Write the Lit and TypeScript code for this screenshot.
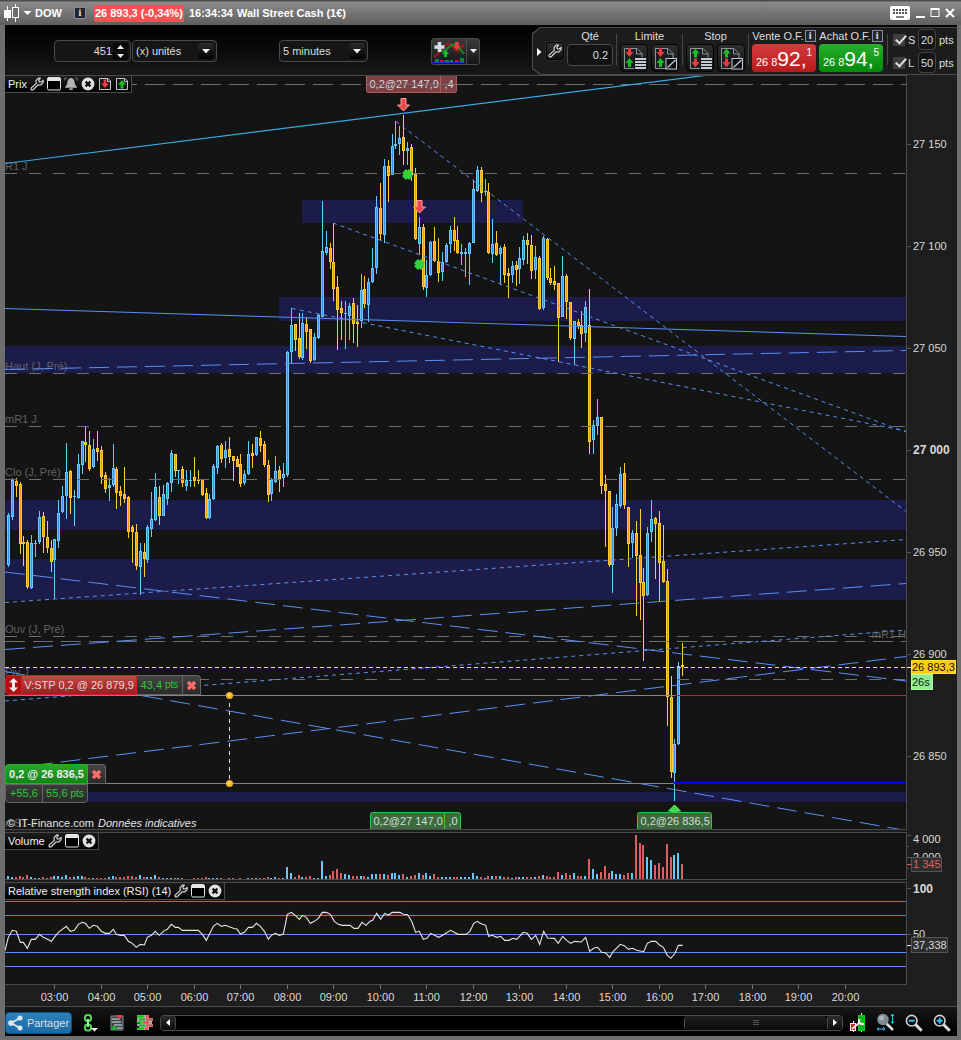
import { LitElement, html, svg, css } from "lit";
import { customElement, state } from "lit/decorators.js";

// One entry per five-minute bar: direction, high, body top, body bottom, low (plot rows).
const BARS = `u513 515 565 567,u478 480 517 520,d478 481 486 497,d482 484 544 554,d536 542 544 566,d540 542 587 589,u535 543 588 589,u540 543 544 557,u511 517 542 544,d512 516 537 553,d521 537 548 553,d540 548 562 572,u539 539 560 599,u500 513 541 548,u486 496 512 513,u443 472 496 519,d470 471 498 514,u490 496 497 526,u454 464 498 499,u441 441 465 474,d427 442 445 462,d431 445 469 471,u439 449 467 468,d431 448 452 461,d446 450 477 484,d472 475 489 493,u478 485 488 501,u444 468 485 487,d467 469 493 509,d486 491 496 506,d467 494 499 503,d496 497 532 538,d525 527 532 563,d524 532 566 570,u543 551 567 595,d543 552 559 577,u525 527 560 563,u492 519 529 537,u473 487 520 521,d486 497 516 525,u485 494 516 516,u482 483 499 505,u450 453 483 492,d454 454 471 477,u470 470 471 484,d466 469 483 487,u470 480 486 491,u470 480 481 487,d457 477 481 487,d470 480 481 484,d480 480 495 496,d488 493 518 519,u494 499 518 519,u464 466 499 500,u445 446 468 474,d443 445 459 463,u441 450 458 468,d437 449 457 463,d456 456 461 481,d456 459 467 467,d454 464 484 487,u470 474 483 485,u441 454 474 475,d444 453 456 468,u437 437 455 456,d431 438 446 452,d441 444 465 467,d460 465 495 502,u478 480 494 501,u456 471 482 483,d466 470 480 492,u463 474 478 487,u351 352 475 477,u308 325 352 363,d324 324 340 351,d313 338 357 359,u313 323 358 360,d317 324 332 349,d329 329 361 363,u333 337 360 361,u314 315 338 339,u201 251 317 317,u231 247 253 255,d243 248 262 269,d223 262 289 301,d276 287 310 350,d301 308 313 340,u301 313 314 349,u303 306 316 340,d298 303 324 343,d305 322 324 347,u274 290 321 328,d276 289 304 308,u278 282 305 322,u248 268 282 283,u196 207 268 274,d183 208 234 240,u159 166 235 243,d160 166 176 202,u134 146 175 175,u121 144 146 149,u126 138 144 155,d115 137 151 165,u142 148 151 165,d144 147 175 181,d168 174 239 240,u217 227 244 255,d224 227 287 290,u260 275 288 297,u241 242 275 276,d227 241 261 262,d238 261 273 282,u252 262 272 281,u243 245 262 263,u226 230 244 253,d217 230 241 251,d226 240 253 254,u244 252 254 265,u248 252 254 277,u242 243 254 285,u180 189 243 243,u166 170 191 192,d167 170 193 202,u179 191 192 196,d183 192 253 254,u219 244 254 263,d231 243 255 256,u246 248 254 285,d244 247 275 283,d268 273 276 298,u261 266 275 283,d261 265 270 286,u247 258 269 284,u236 240 260 265,d233 240 245 264,d235 245 271 279,u246 257 270 279,d256 258 309 310,u236 238 308 310,d238 239 278 280,d268 278 283 285,d266 281 285 290,d283 283 318 362,u256 276 317 317,d274 276 302 319,d302 302 338 340,u321 321 339 365,d319 322 326 329,d311 325 334 348,u301 307 333 342,d289 325 442 454,u420 425 440 454,u399 417 426 435,d417 417 486 494,d475 484 491 547,d491 491 565 567,u507 528 565 593,u494 504 528 536,u467 474 506 508,d463 473 505 509,d507 507 544 567,u530 533 543 558,d521 533 556 616,d509 555 583 620,d568 582 596 661,u527 533 595 596,u500 519 532 542,d517 518 524 579,d511 523 563 601,d525 561 582 583,d569 581 697 726,d676 697 772 778,u739 744 773 801,u662 666 744 745,d643 665 667 676`
  .split(",")
  .map((s, i) => {
    const [high, top, bottom, low] = s.slice(1).split(" ").map(Number);
    return { x: Math.floor(8.45 + 3.875 * i), up: s[0] === "u", high, top, bottom, low };
  });

const VOLUME = [
  3, 2, 2, 3, 2, 4, 2, 1, 1, 2, 1, 2, 3, 3, 2, 4, 2, 2, 3, 3, 2, 1, 1, 1, 1, 1, 2, 3, 2, 2, 2, 3, 3, 2, 4, 2, 2, 2, 4, 2,
  1, 1, 1, 1, 1, 1, 0, 0, 1, 1, 1, 2, 1, 1, 1, 1, 0, 1, 1, 0, 1, 0, 1, 1, 1, 1, 1, 2, 1, 2, 1, 1, 12, 6, 2, 4, 2, 2, 3, 1,
  1, 18, 3, 4, 8, 10, 6, 5, 4, 3, 3, 3, 3, 2, 5, 5, 5, 5, 4, 6, 6, 4, 5, 2, 3, 4, 6, 4, 6, 3, 5, 2, 2, 2, 2, 2, 2, 2, 2, 2,
  6, 3, 2, 1, 3, 3, 3, 3, 2, 2, 1, 2, 2, 2, 2, 2, 2, 3, 4, 3, 2, 2, 7, 4, 6, 4, 6, 3, 3, 3, 20, 10, 5, 7, 13, 6, 8, 5, 5, 4,
  6, 6, 44, 36, 34, 22, 19, 14, 16, 12, 35, 22, 24, 26, 15,
];

// Oscillator points on a grid three times finer than the pane.
const RSI =
  "15,212 25,172 37,151 49,154 61,187 70,187 82,205 94,178 106,178 118,163 130,172 154,184 163,172 175,157 199,139 211,154 223,151 235,133 247,127 256,130 268,145 280,136 292,139 304,154 316,160 328,160 340,148 349,163 361,166 373,166 385,184 397,190 409,202 421,193 433,195 442,172 454,166 466,154 478,166 490,154 502,148 514,133 526,142 535,142 547,151 595,151 607,163 619,181 640,139 652,130 664,139 676,136 700,145 712,148 721,162 733,157 745,142 757,142 769,130 781,139 793,154 805,178 814,166 826,160 838,166 850,162 862,103 874,97 886,106 898,118 907,106 919,112 931,130 943,124 955,115 967,97 979,97 991,103 1003,124 1015,133 1027,136 1050,136 1062,145 1074,145 1086,127 1098,136 1110,124 1118,121 1130,100 1142,118 1154,100 1165,105 1177,97 1200,97 1210,103 1223,104 1235,124 1247,157 1258,154 1270,178 1281,175 1292,160 1316,172 1328,166 1352,151 1374,163 1398,163 1410,154 1421,130 1433,124 1440,130 1457,136 1466,169 1477,166 1490,172 1502,169 1514,181 1527,181 1538,175 1550,178 1570,157 1582,160 1594,178 1607,166 1619,193 1631,154 1643,174 1663,175 1675,190 1688,169 1700,181 1712,190 1724,184 1744,186 1757,172 1769,214 1781,205 1793,202 1805,217 1817,219 1829,232 1840,214 1861,193 1873,197 1885,208 1897,205 1910,211 1931,215 1942,190 1954,184 1967,184 1980,196 1990,202 2002,226 2013,235 2025,220 2035,196 2048,196";

const BANDS = [
  [302, 200, 221, 23], [279, 297, 2000, 24], [5, 346, 2000, 27],
  [5, 500, 2000, 30], [5, 559, 2000, 41], [5, 792, 2000, 10],
];
const LEVELS: [number, string][] = [
  [84, "20 8"], [173, "12 12"], [373, "12 12"], [426, "12 12"],
  [479, "12 12"], [636, "12 12"], [641, "20 8"], [679, "12 12"],
];
const LEVEL_NAMES: [number, string][] = [
  [170, "R1 J"], [370, "Haut (J, Pré)"], [423, "mR1 J"], [476, "Clo (J, Pré)"],
  [633, "Ouv (J, Pré)"], [676, "Piv J"], [827, "mS1 J"],
];
const TRENDS: [number, number, number, number, string][] = [
  [5, 369.5, 906, 350.5, "20 8"], [5, 572, 906, 681, "20 8"], [5, 649.5, 906, 583.5, "20 8"],
  [5, 769, 906, 656.5, "20 8"], [5, 671.5, 906, 830.5, "20 8"],
  [396, 121.5, 906, 511.5, "4 4"], [333, 223, 906, 432, "4 4"], [292, 308.5, 906, 431, "4 4"],
  [5, 602.5, 906, 539.5, "4 4"], [5, 701, 906, 630, "4 4"],
];

const wrench = html`<svg width="14" height="14" viewBox="0 0 14 14">
  <path d="M1 11.2 L6.3 6.3 L6 3.6 L8.6 1 L10.4 1 L8.8 3.4 L9.3 5 L11 5 L13.2 3.4 L13 5.8 L10.6 8 L8 7.8 L2.9 13 L1.2 13 Z" fill="#151515" stroke="#e2e2e2" stroke-width="1.1" stroke-linejoin="round"/>
</svg>`;
const windowIcon = html`<svg width="14" height="14" viewBox="0 0 14 14">
  <rect x=".5" y=".5" width="13" height="12.5" rx="1.5" fill="#000" stroke="#e6e6e6"/><rect x="1" y="1" width="12" height="3" fill="#e6e6e6"/>
</svg>`;
const bell = html`<svg width="14" height="14" viewBox="0 0 14 14">
  <path d="M7 1 C10.2 1.4 10.4 4 10.8 6.500 C11.1 8.500 12.800 9.200 13.200 10.800 L.8 10.800 C1.200 9.200 2.900 8.500 3.200 6.500 C3.600 4 3.800 1.400 7 1Z" fill="#b4b4b4"/>
  <rect x="5" y="11.3" width="4" height="1.7" rx=".8" fill="#ababab"/><path d="M.8 3.5V1h2M13.2 3.5V1h-2" fill="none" stroke="#777"/>
</svg>`;
const closeIcon = html`<svg width="14" height="14" viewBox="0 0 14 14">
  <circle cx="7" cy="7" r="6.4" fill="#e2e2e2"/><path d="M4.6 4.6l4.8 4.8M9.4 4.6l-4.8 4.8" stroke="#111" stroke-width="2.3"/>
</svg>`;
const sheetArrow = (down: boolean) => html`<svg width="14" height="14" viewBox="0 0 14 14">
  <path d="M1.500 1.500h8.500l2.500 2.500v8.500h-11z" fill="#161616" stroke="#c0c6cb"/><path d="M9.500 1.500v3h3" fill="none" stroke="#c0c6cb"/>
  ${down
    ? svg`<path d="M5.6 2.5h2.8v4h2.6L7 11 3 6.500h2.600z" fill="#ee3b42"/>`
    : svg`<path d="M5.600 11.500h2.800v-4h2.600L7 3 3 7.500h2.600z" fill="#1fc026"/>`}
</svg>`;
const cross = html`<svg width="11" height="11" viewBox="0 0 11 11">
  <path d="M2 2l7 7M9 2l-7 7" stroke="#ff6c6c" stroke-width="3.4"/>
</svg>`;
const caret = html`<svg class="caret" width="16" height="16" viewBox="0 0 16 16"><path d="M4 6h8l-4 4.500z" fill="#eee"/></svg>`;

const orderIcon = (limit: boolean, list: boolean) => html`<svg width="23" height="23" viewBox="0 0 23 23">
  <path d="M1.500 1.500h12.500l5 5V21.500H1.500z" fill="#1b1d1f" stroke="#8e979e"/><path d="M13.500 1.500v5.500h5.500" fill="none" stroke="#8e979e"/>
  <path d="${limit ? "M5 1h3v4h2.500L6.500 10 2.500 5H5z" : "M5 10.500h3V6.500h2.500L6.500 1.500l-4 5H5z"}" fill="${limit ? "#ee3b42" : "#17bd25"}"/>
  <path d="${limit ? "M5 20h3v-4h2.500l-4-5-4 5H5z" : "M5 11.500h3v3.500h2.500L6.500 20.500 2.500 15H5z"}" fill="${limit ? "#17bd25" : "#ee3b42"}"/>
  ${list
    ? svg`<rect x="11" y="10.500" width="12" height="12.500" fill="#16181a"/><path d="M12 12h11M12 15h11M12 18h11M12 21h11" stroke="#c6cdd2" stroke-width="1.800"/>`
    : svg`<rect x="12" y="11.500" width="10.500" height="10.500" fill="#0c0d0e" stroke="#c6cdd2"/><path d="M13.500 20.500l8-7.500" stroke="#c6cdd2" stroke-width="1.300"/>`}
</svg>`;

const magnifier = (sign: "+" | "-") => html`<svg width="18" height="18" viewBox="0 0 18 18">
  <path d="M10.500 10.500l6.200 6.200" stroke="#dcdcdc" stroke-width="3"/>
  <circle cx="6.700" cy="6.700" r="5.300" fill="#050505" stroke="#d4d4d4" stroke-width="1.600"/>
  <path d="M3.700 6.700h6${sign === "+" ? "M6.700 3.700v6" : ""}" stroke="#35bff5" stroke-width="2"/>
</svg>`;

@customElement("app-root")
export class AppRoot extends LitElement {
  @state() private stopOn = true;
  @state() private limitOn = true;

  static styles = css`
    :host { display: block; font: 11px/14px "Liberation Sans", Arial, sans-serif; color: #dedede; }
    * { box-sizing: border-box; }
    svg { display: block; flex: none; }
    button { font: inherit; color: inherit; margin: 0; padding: 0; border: 0; background: none; display: flex; align-items: center; justify-content: center; }
    input, select { font: inherit; color: inherit; margin: 0; min-width: 0; }
    .window { display: flex; flex-direction: column; min-height: 100vh; background: #1e1e1e; border: solid #6e6e6e; border-width: 0 4px 4px 5px; }
    .title { height: 25px; margin: 0 -4px 0 -5px; padding: 1px 6px 0 4px; display: flex; align-items: center; background: linear-gradient(#4c4c4c, #4c4c4c 1px, #8a8a8a 2px, #5e5e5e); font-weight: bold; color: #fff; }
    .symbol { margin: 0 12px 0 4px; }
    .info { width: 12px; height: 12px; background: #23252e; border: 1px solid #8b8c96; color: #e8e8e8; font: bold 10px/10px "Liberation Serif", serif; }
    .quote { height: 17px; margin: 0 5px 0 8px; padding: 0 1px; line-height: 17px; background: #fb5052; white-space: nowrap; }
    .instrument { flex: 1; margin-left: 4px; white-space: nowrap; }
    .winctl { display: flex; gap: 5px; align-items: center; }
    .toolbar { height: 50px; display: flex; border-top: 2px solid #050505; background: linear-gradient(#000, #181818); }
    .settings { flex: 1; display: flex; align-items: center; padding-left: 49px; min-width: 0; }
    .field { position: relative; height: 22px; border: 1px solid #4a4a4a; border-radius: 4px; background: #151515; display: flex; align-items: center; }
    .field input { width: 100%; border: 0; background: none; text-align: right; padding: 0 1px; }
    .field select { width: 100%; height: 20px; border: 0; background: none; appearance: none; padding-left: 3px; outline: 0; }
    .caret { position: absolute; right: 2px; top: 2px; background: linear-gradient(#2c2c2c, #000); border-radius: 3px; pointer-events: none; }
    .units { width: 77px; margin-right: 1px; padding-right: 2px; }
    .spin { display: flex; flex-direction: column; gap: 1px; }
    .spin button { width: 15px; height: 8px; background: #080808; border-radius: 2px; }
    .kind { width: 85px; margin-right: 62px; }
    .period { width: 89px; margin-right: 63px; }
    .indicators { display: flex; border: 1px solid #4a4a4a; border-radius: 3px; background: linear-gradient(#3a3a3a, #161616); }
    .indicators button { height: 25px; width: 34px; }
    .indicators button + button { width: 13px; border-left: 1px solid #4a4a4a; }
    .bracket { background: #4a4a4a; padding: 1px 0 1px 1px; clip-path: polygon(0 6px, 8px 0, 100% 0, 100% 100%, 8px 100%, 0 42px); }
    .orders { height: 46px; display: flex; align-items: flex-start; background: #1c1c1c; clip-path: polygon(0 6px, 8px 0, 100% 0, 100% 100%, 8px 100%, 0 40px); }
    .handle { margin-top: 19px; width: 13px; padding-left: 2px; }
    .handle button { width: 8px; height: 10px; }
    .tool { width: 18px; height: 18px; margin: 14px 3px 0 0; border: 1px solid #000; border-radius: 3px; background: linear-gradient(#303030, #121212); box-shadow: 0 0 0 1px #2c2c2c; }
    .group { display: flex; flex-direction: column; align-items: center; }
    .group.price { width: 64px; }
    .group .cap { height: 16px; line-height: 15px; display: flex; gap: 1px; align-items: center; white-space: nowrap; }
    .cap .info { width: 11px; }
    .qty { width: 46px; height: 22px; text-align: right; padding: 0 4px; border: 1px solid #4a4a4a; border-radius: 4px; background: #121212; }
    .sep { width: 1px; height: 31px; margin: 6px 3px 0 3px; background: #484848; }
    .sep.wide { margin: 6px 5px 0 4px; }
    .pair { display: flex; gap: 3px; }
    .pair button { width: 28px; height: 28px; border: 1px solid #050505; border-radius: 4px; background: linear-gradient(#2e2e2e, #141414); }
    .deal { width: 64px; height: 28px; border-radius: 4px; color: #fff; font-size: 11px; align-items: flex-end; padding-bottom: 3px; }
    .deal b { font: 21px/21px "Liberation Sans", Arial, sans-serif; }
    .deal sup { align-self: flex-start; padding-top: 2px; font-size: 10px; line-height: 14px; }
    .sell { background: linear-gradient(#d43c3e, #b8191d); }
    .buy { background: linear-gradient(#27ae2c, #048a0a); }
    .gap3 { width: 3px; }
    .guards { display: grid; grid-template-columns: 12px 7px 18px 16px; column-gap: 3px; row-gap: 2px; align-items: center; padding: 1px 2px 0 0; }
    .guards input[type="checkbox"] { appearance: none; width: 12px; height: 12px; background: #3e3e3e; display: grid; }
    .guards input[type="checkbox"]:checked::after { content: ""; width: 4px; height: 9px; margin: -1px 0 0 5px; border: solid #ddd; border-width: 0 2px 2px 0; transform: rotate(42deg); }
    .guards input[type="text"] { width: 18px; height: 21px; padding: 0; text-align: center; border: 1px solid #444; border-radius: 4px; background: #141414; }
    .charts { flex: 1; display: grid; grid-template-columns: minmax(0, 1fr) 50px; grid-template-rows: minmax(0, 1fr) 50px 105px 21px; }
    .pane { position: relative; overflow: hidden; background: #141414; border: 1px solid #4b4b4b; border-left: 0; }
    .pane.lower { margin-top: 2px; }
    .pane > svg.plot { position: absolute; inset: 0; width: 100%; height: 100%; }
    svg.axis { width: 100%; height: 100%; overflow: hidden; }
    svg text { font-family: "Liberation Sans", Arial, sans-serif; font-size: 11px; fill: #dadada; }
    svg text.major { font-size: 12px; font-weight: bold; }
    svg text.level { fill: #626262; }
    svg text.dark { fill: #141414; }
    svg text.loss { fill: #e06060; }
    .head { position: relative; width: max-content; height: 17px; display: flex; align-items: center; gap: 3px; padding: 0 2px 0 3px; background: linear-gradient(#1c1c1c, #000); border: solid #4b4b4b; border-width: 0 1px 1px 0; color: #eee; }
    .overlay { position: absolute; left: 0; }
    .stop { top: 599px; }
    .position { top: 688px; }
    .credit { bottom: -1px; left: 2px; color: #e4e4e4; }
    .credit em { margin-left: 1px; }
    .strip { display: flex; height: 20px; white-space: nowrap; }
    .strip > * { border: 1px solid #666; border-left-width: 0; background: linear-gradient(#444, #2a2a2a); display: flex; align-items: center; justify-content: center; padding: 0; }
    .strip > :last-child { border-radius: 0 4px 0 0; }
    .strip .move { width: 17px; background: #b40e12; border: 1px solid #c22; border-radius: 4px 0 0 4px; }
    .strip .order { width: 115px; background: linear-gradient(#c44, #9f1c20); border-color: #c22; }
    .strip .points { width: 46px; color: #2fc835; }
    .strip .points small, .result small { font-size: 10px; padding-left: 3px; }
    .strip .x { width: 18px; }
    .strip .held { width: 83px; background: linear-gradient(#27a32c, #128517); border: 1px solid #1fb526; border-radius: 3px 0 0 0; font-weight: bold; color: #eee; }
    .result { display: flex; width: 83px; height: 19px; border: 1px solid #666; border-radius: 0 0 4px 4px; background: linear-gradient(#3c3c3c, #2a2a2a); color: #2fc835; line-height: 17px; text-align: center; }
    .result span { flex: 1 0 37px; border-right: 1px solid #666; }
    .result span + span { flex: 1 0 44px; border: 0; }
    .footer { height: 30px; display: flex; align-items: center; border-top: 1px solid #4b4b4b; background: linear-gradient(#161616, #000); padding: 2px 6px 0 0; }
    .share { width: 67px; height: 22px; gap: 4px; background: linear-gradient(#2c82bd, #1a6aa3); border: 1px solid #0f4f80; border-radius: 4px; margin-right: 11px; }
    .footer > .ico { margin-right: 11px; }
    .scroll { flex: 1; height: 16px; margin: 0 7px 0 -4px; display: flex; background: #000; border: 1px solid #4a4a4a; border-radius: 4px; }
    .scroll button { width: 15px; border: 1px solid #4a4a4a; border-width: 0 1px 0 0; background: linear-gradient(#2c2c2c, #0c0c0c); border-radius: 3px; }
    .scroll .track { flex: 1; display: flex; justify-content: flex-end; }
    .scroll .track + button { border-width: 0 0 0 1px; }
    .scroll .thumb { width: 22%; border-left: 1px solid #4a4a4a; border-radius: 4px; background: linear-gradient(#1d1d1d, #0b0b0b); display: flex; align-items: center; justify-content: center; }
    .zooms { display: flex; gap: 10px; align-items: center; }
  `;

  private tradeTag(x: number, y: number, w: number, red: boolean, label: string, rest = "") {
    const fill = red ? "#7d4144" : "#3b6b3c";
    const line = red ? "#b35a5d" : "#35c63b";
    const baseline = y + (red ? 17.5 : 12.5);
    return svg`
      ${rest ? svg`<rect x=${x + 60} y=${y} width=${w - 60 + 16} height="22" rx="2" fill=${fill} stroke=${line}/>
        <text x=${x + w + 4} y=${baseline}>${rest}</text>` : ""}
      <rect x=${x} y=${y} width=${w} height="22" rx="2" fill=${fill} stroke=${line}/>
      <text x=${x + 3} y=${baseline}>${label}</text>`;
  }

  private sellArrow = (x: number, y: number) =>
    svg`<path transform="translate(${x} ${y})" d="M-2.500 0h5v6.500h3.500L0 12.500-6 6.500h3.500z" fill="#ee4a4e" stroke="#ff9a9c"/>`;

  private exitMark = (x: number, y: number) =>
    svg`<path transform="translate(${x} ${y})" d="M-3.500-3.500L3.500 3.500M3.500-3.500L-3.500 3.500" stroke="#35d03d" stroke-width="5.500"/>`;

  private pricePlot() {
    return svg`<g transform="translate(-5 -76)">
      ${BANDS.map(([x, y, w, h]) => svg`<rect x=${x} y=${y} width=${w} height=${h} fill="#1c1c4a"/>`)}
      ${LEVEL_NAMES.map(([y, t]) => svg`<text class="level" x="5" y=${y}>${t}</text>`)}
      <text class="level" x="906" y="638" text-anchor="end">mR1 H</text>
      <g shape-rendering="crispEdges">
        ${BARS.map((b) => svg`
          <rect x=${b.x} y=${b.high} width="1" height=${Math.max(1, b.low - b.high)} fill=${b.up ? "#66ccff" : "#ffcc33"}/>
          <rect x=${b.x - 1} y=${b.top} width="3" height=${Math.max(1, b.bottom - b.top)} fill=${b.up ? "#66ccff" : "#ffcc33"}/>
          ${b.bottom - b.top > 2 ? svg`<rect x=${b.x} y=${b.top + 1} width="1" height=${b.bottom - b.top - 2} fill=${b.up ? "#3b8ff2" : "#ff9900"}/>` : ""}`)}
      </g>
      ${LEVELS.map(([y, dash]) => svg`<line x1="5" x2="2000" y1=${y + 0.5} y2=${y + 0.5} stroke="#6e6e6e" stroke-dasharray=${dash}/>`)}
      <line x1="5" y1="163.500" x2="780" y2="66" stroke="#38a9e4" stroke-width="1.200"/>
      <line x1="5" y1="308.500" x2="906" y2="336.500" stroke="#5b8ef5"/>
      ${TRENDS.map(([x1, y1, x2, y2, dash]) => svg`<line x1=${x1} y1=${y1} x2=${x2} y2=${y2} stroke="#5b8ef5" stroke-dasharray=${dash}/>`)}
      <g shape-rendering="crispEdges">
        <line x1="5" x2="675" y1="695.500" y2="695.500" stroke="#858585"/>
        <line x1="675" x2="2000" y1="695.500" y2="695.500" stroke="#a53232"/>
        <line x1="5" x2="674" y1="783.500" y2="783.500" stroke="#858585"/>
        <line x1="674" x2="2000" y1="783" y2="783" stroke="#0000ff" stroke-width="2"/>
        <line x1="5" x2="2000" y1="667.500" y2="667.500" stroke="#ffff00" stroke-dasharray="4 3"/>
        <line x1="229.500" x2="229.500" y1="695" y2="783" stroke="#ddd" stroke-dasharray="4 4"/>
      </g>
      <circle cx="229.500" cy="695.500" r="3.500" fill="#f9b020"/><circle cx="229" cy="695" r="1.500" fill="#ffe08a"/>
      <circle cx="229.500" cy="783.500" r="3.500" fill="#f9b020"/><circle cx="229" cy="783" r="1.500" fill="#ffe08a"/>
      ${this.sellArrow(403.5, 98.5)}${this.sellArrow(419.5, 200.5)}
      ${this.exitMark(407.5, 174.5)}${this.exitMark(419.5, 264.5)}
      <path d="M668.500 811l6-6 6 6h-3.500v6h-5v-6z" fill="#3fd546" stroke="#6cf072"/>
      ${this.tradeTag(366.5, 70.5, 74, true, "0,2@27 147,9", ",4")}
      <line x1="366" x2="457" y1="84.500" y2="84.500" stroke="#6e6e6e"/>
      ${this.tradeTag(370.5, 812.5, 74, false, "0,2@27 147,0", ",0")}
      ${this.tradeTag(637.5, 812.5, 74, false, "0,2@26 836,5")}
    </g>`;
  }

  private priceAxis() {
    const steps: [number, string][] = [[144, "27 150"], [246, "27 100"], [348, "27 050"], [450, "27 000"], [552, "26 950"], [654, "26 900"], [756, "26 850"]];
    return html`<svg class="axis"><g transform="translate(-907 -75)">
      ${steps.map(([y, t]) => svg`<line x1="907" x2="911" y1=${y + 0.5} y2=${y + 0.5} stroke="#555"/>
        <text class=${t === "27 000" ? "major" : ""} x="913" y=${y + 4}>${t}</text>`)}
      <line x1="907" x2="911" y1="667.500" y2="667.500" stroke="#eee"/>
      <rect x="911.500" y="660.500" width="44" height="13" fill="#fccb12" stroke="#ffdf3a"/><text class="dark" x="912" y="671">26 893,3</text>
      <rect x="911.500" y="674.500" width="21" height="15" fill="#90ee90" stroke="#a8f8a8"/><text class="dark" x="912" y="686">26s</text>
    </g></svg>`;
  }

  private head(name: string, full = false) {
    return html`<div class="head"><span>${name}</span>
      <button aria-label="Réglages">${wrench}</button><button aria-label="Agrandir">${windowIcon}</button>
      ${full ? html`<button aria-label="Alerte">${bell}</button>` : ""}
      <button aria-label="Fermer">${closeIcon}</button>
      ${full ? html`<button aria-label="Vendre">${sheetArrow(true)}</button><button aria-label="Acheter">${sheetArrow(false)}</button>` : ""}
    </div>`;
  }

  render() {
    return html`<div class="window">
      <header class="title">
        <svg width="16" height="18" viewBox="0 0 16 18"><path d="M3.500 2v15M11.500 0v18" stroke="#fff"/><rect x="0" y="6" width="7" height="8" fill="#fff"/><rect x="8.500" y="3.500" width="6" height="10" fill="#6d6d6d" stroke="#fff"/></svg>
        <svg width="11" height="8" viewBox="0 0 11 8"><path d="M3.500 2h8L7.500 6z" fill="#fff"/></svg>
        <span class="symbol">DOW</span>
        <button class="info" aria-label="Informations">i</button>
        <span class="quote">26 893,3 (-0,34%)</span><span>16:34:34</span>
        <span class="instrument">Wall Street Cash (1€)</span>
        <div class="winctl">
          <button aria-label="Clavier"><svg width="20" height="14" viewBox="0 0 20 14"><rect width="20" height="14" rx="2" fill="#fff"/><path d="M3 4h14M3 7h14" stroke="#555" stroke-width="2" stroke-dasharray="2 1"/><path d="M6 11h8" stroke="#555" stroke-width="1.500"/></svg></button>
          <button aria-label="Réduire"><svg width="10" height="12" viewBox="0 0 10 12"><path d="M1 10h9" stroke="#fff" stroke-width="2"/></svg></button>
          <button aria-label="Agrandir"><svg width="10" height="12" viewBox="0 0 10 12"><path d="M1 2.500h8v7H1z" fill="none" stroke="#fff"/><path d="M.5 2h9" stroke="#fff" stroke-width="2"/></svg></button>
          <button aria-label="Fermer"><svg width="10" height="12" viewBox="0 0 10 12"><path d="M1 2l8 8M9 2L1 10" stroke="#fff" stroke-width="2"/></svg></button>
        </div>
      </header>

      <div class="toolbar">
        <div class="settings">
          <div class="field units"><input type="text" value="451" aria-label="Nombre d'unités">
            <div class="spin"><button aria-label="Plus"><svg width="7" height="4"><path d="M0 4h7L3.500 0z" fill="#eee"/></svg></button><button aria-label="Moins"><svg width="7" height="4"><path d="M0 0h7L3.500 4z" fill="#eee"/></svg></button></div></div>
          <div class="field kind"><select aria-label="Type d'unités"><option>(x) unités</option></select>${caret}</div>
          <div class="field period"><select aria-label="Période"><option>5 minutes</option></select>${caret}</div>
          <div class="indicators">
            <button aria-label="Ajouter un indicateur"><svg width="32" height="23" viewBox="0 0 32 23">
              <path d="M1 17C8 14 10 3 16 4S22 19 31 4" fill="none" stroke="#9a1c1c" stroke-width="2.200"/><path d="M1 8C8 6 9 15 14 9S22 2 31 14" fill="none" stroke="#168a22" stroke-width="2"/>
              <path d="M6.500 2v10M1.500 7h10" stroke="#d3dce8" stroke-width="3.600"/><path d="M22 2h4v4h2l-4 4-4-4h2z" fill="#ee3b42"/><path d="M11 17h3v-3h2l-3.500-4L9 14h2z" fill="#17bd25"/>
              <path d="M2 19h4v3H2zM12 20h4v2h-4zM17 20h3v2h-3zM27 18h4v4h-4z" fill="#108d16"/><path d="M7 20h4v2H7zM22 20h4v2h-4z" fill="#b81d1d"/><path d="M0 22.500h32" stroke="#2233dd"/></svg></button>
            <button aria-label="Liste des indicateurs"><svg width="7" height="4"><path d="M0 0h7L3.500 4z" fill="#eee"/></svg></button>
          </div>
        </div>

        <div class="bracket"><div class="orders">
          <div class="handle"><button aria-label="Replier"><svg width="5" height="8"><path d="M0 0v8l4.500-4z" fill="#fff"/></svg></button></div>
          <button class="tool" aria-label="Réglages des ordres">${wrench}</button>
          <div class="group"><label class="cap" for="qty">Qté</label><input class="qty" id="qty" type="text" value="0.2"></div>
          <div class="sep"></div>
          <div class="group"><span class="cap">Limite</span><div class="pair"><button aria-label="Limite, liste">${orderIcon(true, true)}</button><button aria-label="Limite, tracé">${orderIcon(true, false)}</button></div></div>
          <div class="sep"></div>
          <div class="group"><span class="cap">Stop</span><div class="pair"><button aria-label="Stop, liste">${orderIcon(false, true)}</button><button aria-label="Stop, tracé">${orderIcon(false, false)}</button></div></div>
          <div class="sep"></div>
          <div class="group price"><span class="cap">Vente O.F.<button class="info" aria-label="Aide vente">i</button></span><button class="deal sell">26 8<b>92,</b><sup>1</sup></button></div>
          <div class="gap3"></div>
          <div class="group price"><span class="cap">Achat O.F.<button class="info" aria-label="Aide achat">i</button></span><button class="deal buy">26 8<b>94,</b><sup>5</sup></button></div>
          <div class="sep wide"></div>
          <div class="guards">
            <input type="checkbox" id="s" .checked=${this.stopOn} @change=${() => (this.stopOn = !this.stopOn)}><label for="s">S</label><input type="text" value="20" aria-label="Stop en points"><span>pts</span>
            <input type="checkbox" id="l" .checked=${this.limitOn} @change=${() => (this.limitOn = !this.limitOn)}><label for="l">L</label><input type="text" value="50" aria-label="Limite en points"><span>pts</span>
          </div>
        </div></div>
      </div>

      <main class="charts">
        <section class="pane">
          <svg class="plot">${this.pricePlot()}</svg>
          ${this.head("Prix", true)}
          <div class="overlay stop strip">
            <button class="move" aria-label="Déplacer"><svg width="9" height="14" viewBox="0 0 9 14"><path d="M4.500 0L9 4.500H6v5h3L4.500 14 0 9.500h3v-5H0z" fill="#eee"/></svg></button>
            <span class="order">V:STP 0,2 @ 26 879,9</span><span class="points">43,4<small>pts</small></span><button class="x" aria-label="Annuler">${cross}</button>
          </div>
          <div class="overlay position">
            <div class="strip"><span class="held">0,2 @ 26 836,5</span><button class="x" aria-label="Clôturer">${cross}</button></div>
            <div class="result"><span>+55,6</span><span>55,6<small>pts</small></span></div>
          </div>
          <div class="overlay credit">© IT-Finance.com <em>Données indicatives</em></div>
        </section>
        ${this.priceAxis()}

        <section class="pane lower">
          <svg class="plot"><g transform="translate(-5 0)" shape-rendering="crispEdges">
            ${BARS.map((b, i) => svg`<rect x=${b.x - 1} y=${46 - VOLUME[i]} width="2" height=${VOLUME[i]} fill=${b.up ? "#66c8ff" : "#dd6060"}/>`)}
          </g></svg>
          ${this.head("Volume")}
        </section>
        <svg class="axis">
          <path d="M0 5.500h4M0 16.500h2M0 27.500h4M0 38.500h2" stroke="#555"/><path d="M0 34.500h4" stroke="#e06060"/>
          <text x="6" y="13">4 000</text><text x="6" y="31">2 000</text>
          <rect x="4.500" y="27.500" width="30" height="14" fill="#2e2e2e" stroke="#555"/><text class="loss" x="6" y="38">1 345</text>
        </svg>

        <section class="pane lower">
          <svg class="plot"><g transform="translate(-5 -883)">
            <path d="M5 901.500H2000M5 915.500H2000" stroke="#2f93ec"/><path d="M5 934.500H2000M5 952.500H2000M5 966.500H2000" stroke="#5b8ef5"/>
            <path d="M287 915l2-2.500h4l2 2.500zM320 915l2-2.500h5l3 2.500zM388 915l3-2.500h10l3 2.500z" fill="#5a1518"/>
            <g transform="translate(0 880) scale(.33333)"><polyline points=${RSI} fill="none" stroke="#e6e6e6" stroke-width="3.300"/></g>
          </g></svg>
          ${this.head("Relative strength index (RSI) (14)")}
        </section>
        <svg class="axis">
          <path d="M0 8.500h4M0 54.500h4" stroke="#555"/><path d="M0 65.500h4" stroke="#eee"/>
          <text class="major" x="6" y="13">100</text><text x="6" y="58">50</text>
          <rect x="4.500" y="57.500" width="36" height="15" fill="#2e2e2e" stroke="#555"/><text x="6" y="69">37,338</text>
        </svg>
        <svg class="axis">
          ${Array.from({ length: 18 }, (_, i) => {
            const x = Math.round(49 + 46.5 * i) + 0.5;
            return svg`<line x1=${x} x2=${x} y1="0" y2="4" stroke="#777"/><text x=${x} y="16" text-anchor="middle">${String(i + 3).padStart(2, "0")}:00</text>`;
          })}
        </svg>
      </main>

      <footer class="footer">
        <button class="share"><svg width="15" height="16" viewBox="0 0 15 16"><path d="M12 3L3 8l9 5" fill="none" stroke="#dfe7ee" stroke-width="1.800"/><circle cx="12" cy="3" r="2.500" fill="#dfe7ee"/><circle cx="3" cy="8" r="2.800" fill="#dfe7ee"/><circle cx="12" cy="13" r="2.500" fill="#dfe7ee"/></svg>Partager</button>
        <button class="ico" aria-label="Lier"><svg width="15" height="18" viewBox="0 0 15 18"><rect x="2" y="1" width="6" height="6" rx="2.500" fill="none" stroke="#4fdc58" stroke-width="2"/><rect x="2" y="10.500" width="6" height="6" rx="2.500" fill="none" stroke="#4fdc58" stroke-width="2"/><path d="M5 5v8" stroke="#9af29e" stroke-width="2"/><path d="M8 14h7l-3.500 3.500z" fill="#eee"/></svg></button>
        <button class="ico" aria-label="Carnet d'ordres"><svg width="16" height="18" viewBox="0 0 16 18"><path d="M2 2h12v14H2z" fill="#3c4248" stroke="#7f8a93"/><path d="M3 5h8M3 8h9M5 11h8M8 14h5" stroke="#aab2b8" stroke-width="1.500"/><path d="M7 1h7L10.500 5.500z" fill="#ee3b42"/><path d="M2 15.500h7L5 11z" fill="#17bd25"/></svg></button>
        <button class="ico" aria-label="Profondeur"><svg width="17" height="18" viewBox="0 0 17 18"><path d="M1 1h12v3h4v3h-1v3h1v3h-4v3H1v-2h2v-2H1v-2h3V8H1z" fill="#aaa"/><path d="M1 2.500h7M3 5.500h6M1 8.500h5M3 11.500h6M1 14.500h7" stroke="#10c018" stroke-width="2"/><path d="M10 2.500h3M10 5.500h7M7 8.500h6M10 11.500h7M9 14.500h3" stroke="#f04545" stroke-width="2"/></svg></button>
        <div class="scroll"><button aria-label="Gauche"><svg width="4" height="7"><path d="M4 0v7L0 3.500z" fill="#fff"/></svg></button>
          <div class="track"><div class="thumb"><svg width="6" height="6"><path d="M0 .5h6M0 2.500h6M0 4.500h6" stroke="#555"/></svg></div></div>
          <button aria-label="Droite"><svg width="4" height="7"><path d="M0 0v7l4-3.500z" fill="#fff"/></svg></button></div>
        <div class="zooms">
          <button aria-label="Réglages du graphique"><svg width="16" height="20" viewBox="0 0 16 20"><path d="M3.500 8v11M11.500 0v19" stroke="#eee"/><rect x=".5" y="10.500" width="5" height="7" fill="#c22" stroke="#eee"/><rect x="8.500" y="2.500" width="6" height="15" fill="#0cb814" stroke="#0cd018"/><path d="M2 16l7-6M9 6v3l2 2h3" fill="none" stroke="#eee" stroke-width="2"/></svg></button>
          <button aria-label="Zoom automatique"><svg width="19" height="19" viewBox="0 0 19 19"><path d="M10 10l7 7" stroke="#ddd" stroke-width="2.500"/><circle cx="7" cy="6.500" r="5.800" fill="#7f8992"/><circle cx="5.500" cy="5" r="2.500" fill="#aab3ba"/><path d="M16.500 1v9M15 3l1.500-2L18 3M15 8.500l1.500 2 1.500-2M1 16h8M3 14.500L1 16l2 1.500M7 14.500L9 16l-2 1.500" fill="none" stroke="#35bff5"/></svg></button>
          <button aria-label="Zoom arrière">${magnifier("-")}</button>
          <button aria-label="Zoom avant">${magnifier("+")}</button>
        </div>
      </footer>
    </div>`;
  }
}
